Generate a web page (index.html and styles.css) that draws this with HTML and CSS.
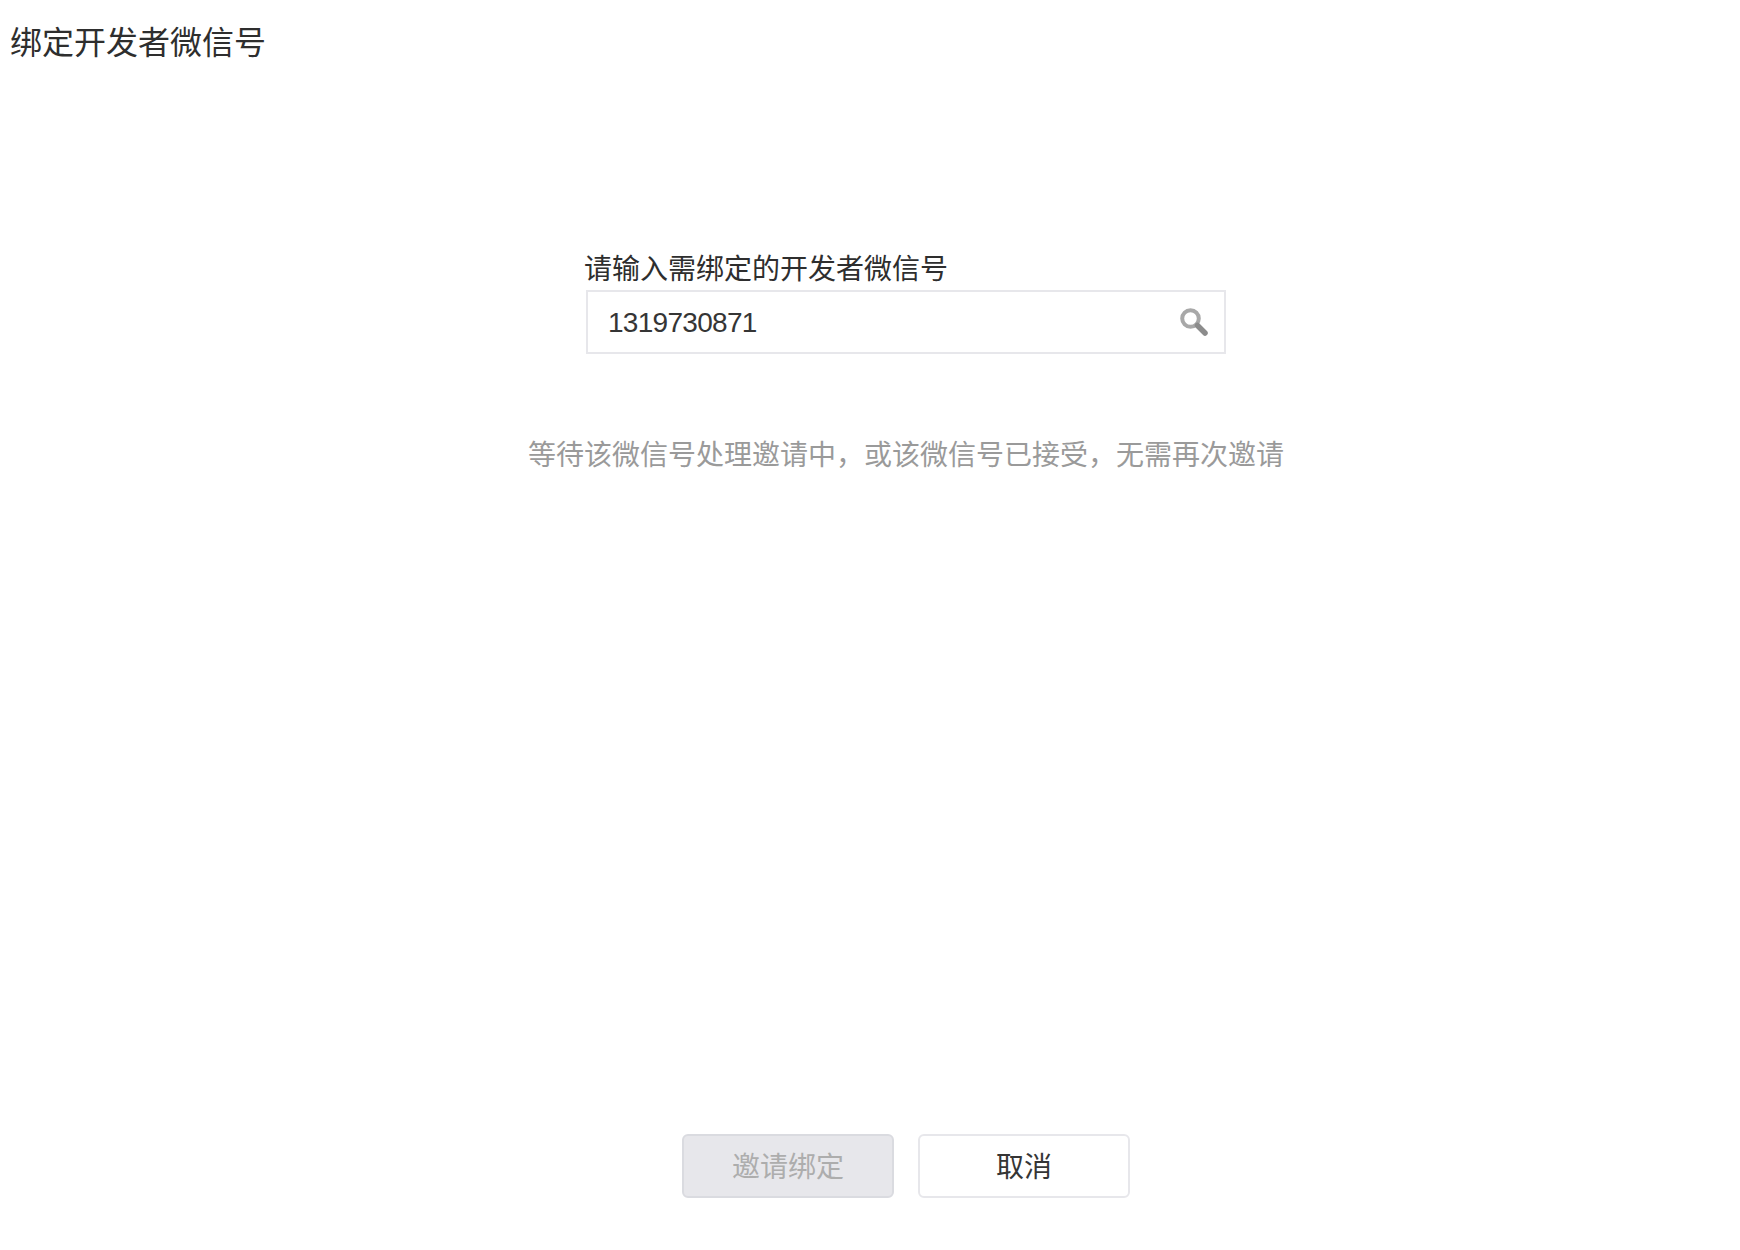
FILE: index.html
```html
<!DOCTYPE html>
<html lang="zh-CN">
<head>
    <meta charset="UTF-8">
    <title>绑定开发者微信号</title>
    <link rel="stylesheet" href="styles.css">
</head>
<body>
    <h1 class="page-title">绑定开发者微信号</h1>

    <div class="content">
        <div class="form">
            <label class="form-label" for="wechat-id">请输入需绑定的开发者微信号</label>
            <div class="search-box">
                <input class="search-input" id="wechat-id" type="text" value="1319730871">
                <svg class="search-icon" viewBox="0 0 30 30" width="30" height="30">
                    <circle cx="11.5" cy="11.5" r="8.3" fill="none" stroke="#a8a8a8" stroke-width="4"/>
                    <path d="M18.5 18.5L26 26" stroke="#8c8c8c" stroke-width="5.5" stroke-linecap="round"/>
                </svg>
            </div>
        </div>

        <p class="hint">等待该微信号处理邀请中，或该微信号已接受，无需再次邀请</p>

        <div class="actions">
            <button class="btn btn-disabled" type="button" disabled>邀请绑定</button>
            <button class="btn" type="button">取消</button>
        </div>
    </div>
</body>
</html>
```

FILE: styles.css
```css
* {
    box-sizing: border-box;
}
html, body {
    height: 100%;
}
body {
    margin: 0;
    display: flex;
    flex-direction: column;
    background-color: #fff;
    color: #353535;
    font-family: "Liberation Sans", "Noto Sans CJK SC", sans-serif;
}
.page-title {
    margin: 0;
    padding: 22px 0 0 10px;
    font-size: 32px;
    font-weight: normal;
    line-height: 42px;
    color: #2e2e2e;
}
.content {
    flex: 1;
    display: flex;
    flex-direction: column;
    align-items: center;
    padding: 186px 0 52px 72px;
}
.form {
    width: 640px;
}
.form-label {
    display: block;
    margin-left: -2px;
    font-size: 28px;
    line-height: 40px;
    color: #2e2e2e;
}
.search-box {
    display: flex;
    align-items: center;
    height: 64px;
    padding: 0 15px 0 20px;
    border: 2px solid #e7e7eb;
}
.search-input {
    flex: 1;
    min-width: 0;
    padding: 2px 0 0;
    border: 0;
    outline: 0;
    font-family: inherit;
    font-size: 28px;
    letter-spacing: -0.7px;
    color: #353535;
}
.search-icon {
    flex: none;
}
.hint {
    margin: 0;
    padding-top: 82px;
    font-size: 28px;
    line-height: 40px;
    white-space: nowrap;
    color: #9a9a9a;
}
.actions {
    margin-top: auto;
    display: flex;
    gap: 24px;
}
.btn {
    width: 212px;
    height: 64px;
    padding: 0 0 2px;
    border: 2px solid #e7e7eb;
    border-radius: 6px;
    background-color: #fff;
    font-family: inherit;
    font-size: 28px;
    color: #353535;
}
.btn-disabled {
    border-color: #dadbe0;
    background-color: #e7e7eb;
    color: #adadad;
}
```
